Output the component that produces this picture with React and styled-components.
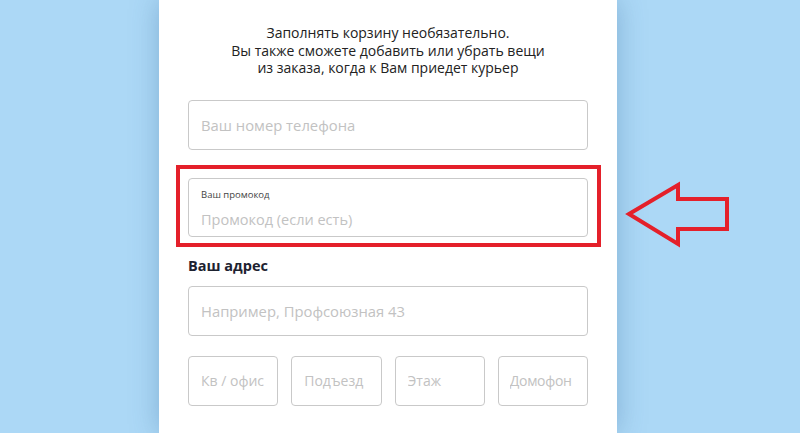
import styled, { createGlobalStyle } from "styled-components";

const GlobalStyle = createGlobalStyle`
  html, body {
    margin: 0;
    padding: 0;
    background: #acd8f6;
    font-family: "Open Sans", "Noto Sans", sans-serif;
  }
`;

const Page = styled.div`
  height: 433px;
  overflow: hidden;
  display: flex;
  padding-left: 159px;
  background: #acd8f6;
`;

const Panel = styled.div`
  width: 458px;
  box-sizing: border-box;
  padding: 24px 29px 0;
  background: #fff;
  box-shadow: 0 0 26px rgba(50, 100, 150, 0.35);
  display: flex;
  flex-direction: column;
`;

const Intro = styled.p`
  margin: 0 0 23px;
  text-align: center;
  font-size: 14px;
  line-height: 17.5px;
  color: #222;
`;

const Input = styled.input`
  box-sizing: border-box;
  width: 100%;
  height: 50px;
  padding: 0 12px;
  border: 1px solid #c9c9c9;
  border-radius: 4px;
  font-family: inherit;
  font-size: 14.8px;
  color: #222;
  outline: none;
  &::placeholder {
    color: #c2c2c2;
  }
`;

const Highlight = styled.div`
  position: relative;
  margin: 15px -13px 0 -12px;
  padding: 9px 9px 6px 8px;
  border: 4px solid #e4202a;
`;

const PromoField = styled.label`
  display: flex;
  flex-direction: column;
  box-sizing: border-box;
  height: 59px;
  padding: 10px 12px 0;
  border: 1px solid #c9c9c9;
  border-radius: 4px;
`;

const PromoLabel = styled.span`
  font-size: 9.5px;
  color: #444;
  line-height: 12px;
`;

const PromoInput = styled.input`
  border: none;
  padding: 0;
  margin-top: 9px;
  font-family: inherit;
  font-size: 14.5px;
  outline: none;
  &::placeholder {
    color: #c2c2c2;
  }
`;

const Arrow = styled.svg`
  position: absolute;
  left: calc(100% + 28px);
  top: 12px;
`;

const Heading = styled.h3`
  margin: 10px 0 11px;
  font-size: 14.5px;
  font-weight: 700;
  line-height: 18px;
  color: #1d2230;
`;

const Row = styled.div`
  display: grid;
  grid-template-columns: repeat(4, 1fr);
  gap: 13px;
  margin-top: 20px;
  input {
    padding: 0 0 0 12px;
    font-size: 14px;
  }
  input:last-child {
    padding-left: 11px;
    letter-spacing: -0.3px;
  }
`;

export default function App() {
  return (
    <>
      <GlobalStyle />
      <Page>
        <Panel>
          <Intro>
            Заполнять корзину необязательно.
            <br />
            Вы также сможете добавить или убрать вещи
            <br />
            из заказа, когда к Вам приедет курьер
          </Intro>
          <Input placeholder="Ваш номер телефона" />
          <Highlight>
            <PromoField>
              <PromoLabel>Ваш промокод</PromoLabel>
              <PromoInput placeholder="Промокод (если есть)" />
            </PromoField>
            <Arrow width="106" height="68" viewBox="0 0 106 68">
              <polygon
                points="4,33 53,4 53,18 102,18 102,48 53,48 53,63"
                fill="none"
                stroke="#e4202a"
                strokeWidth="4"
                strokeLinejoin="miter"
              />
            </Arrow>
          </Highlight>
          <Heading>Ваш адрес</Heading>
          <Input placeholder="Например, Профсоюзная 43" />
          <Row>
            <Input placeholder="Кв / офис" />
            <Input placeholder="Подъезд" />
            <Input placeholder="Этаж" />
            <Input placeholder="Домофон" />
          </Row>
        </Panel>
      </Page>
    </>
  );
}
